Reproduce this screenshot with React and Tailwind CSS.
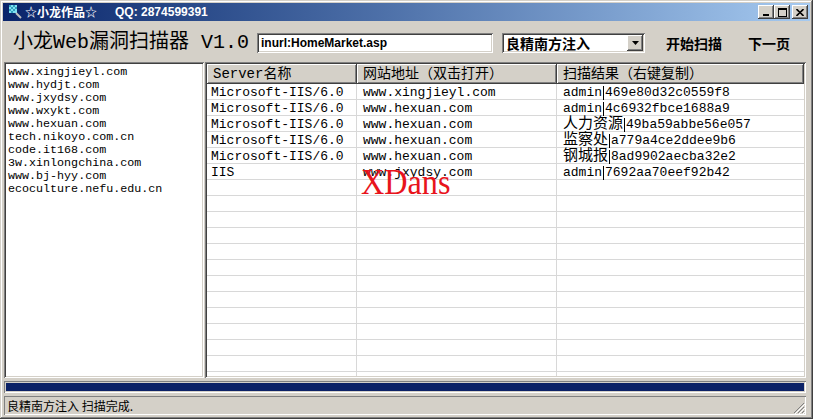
import React from "react";

const raised =
  "shadow-[inset_-1px_-1px_#404040,inset_1px_1px_#ffffff,inset_-2px_-2px_#808080,inset_2px_2px_#d4d0c8]";
const sunken =
  "shadow-[inset_1px_1px_#808080,inset_-1px_-1px_#ffffff,inset_2px_2px_#404040,inset_-2px_-2px_#d4d0c8]";

const sites = [
  "www.xingjieyl.com",
  "www.hydjt.com",
  "www.jxydsy.com",
  "www.wxykt.com",
  "www.hexuan.com",
  "tech.nikoyo.com.cn",
  "code.it168.com",
  "3w.xinlongchina.com",
  "www.bj-hyy.com",
  "ecoculture.nefu.edu.cn",
];

const rows = [
  ["Microsoft-IIS/6.0", "www.xingjieyl.com", "admin", "469e80d32c0559f8", false],
  ["Microsoft-IIS/6.0", "www.hexuan.com", "admin", "4c6932fbce1688a9", false],
  ["Microsoft-IIS/6.0", "www.hexuan.com", "人力资源", "49ba59abbe56e057", true],
  ["Microsoft-IIS/6.0", "www.hexuan.com", "监察处", "a779a4ce2ddee9b6", true],
  ["Microsoft-IIS/6.0", "www.hexuan.com", "钢城报", "8ad9902aecba32e2", true],
  ["IIS", "www.jxydsy.com", "admin", "7692aa70eef92b42", false],
];

function TitleIcon() {
  return (
    <svg width="16" height="16" viewBox="0 0 16 16" className="shrink-0">
      <rect x="2" y="1" width="8" height="8" fill="#7fe0f0" />
      <path d="M2 1h2v2H2zM6 1h2v2H6zM4 3h2v2H4zM8 3h2v2H8zM2 5h2v2H2zM6 5h2v2H6zM4 7h2v2H4z" fill="#30a0c0" />
      <path d="M9 9l5 5" stroke="#c0c0c0" strokeWidth="2" />
    </svg>
  );
}

function WinBtn({ children }) {
  return (
    <div className={`w-[16px] h-[14px] bg-[#d4d0c8] ${raised} flex items-center justify-center`}>
      {children}
    </div>
  );
}

export default function App() {
  return (
    <div
      className={`relative w-[813px] h-[419px] overflow-hidden bg-[#d4d0c8] flex flex-col shadow-[inset_-1px_-1px_#404040,inset_1px_1px_#d4d0c8,inset_-2px_-2px_#808080,inset_2px_2px_#ffffff] font-['Noto_Sans_CJK_SC',sans-serif]`}
    >
      {/* Title bar */}
      <div className="mx-[3px] mt-[3px] h-[18px] bg-linear-to-r from-[#0a246a] to-[#a6caf0] flex items-center pl-[4px] pr-[2px]">
        <TitleIcon />
        <span className="ml-[2px] text-white font-bold text-[12px] leading-none">☆小龙作品☆</span>
        <span className="ml-[18px] text-white font-bold text-[12px] leading-none font-['Liberation_Sans',sans-serif]">
          QQ: 2874599391
        </span>
        <div className="ml-auto flex items-center">
          <WinBtn>
            <svg width="8" height="7" viewBox="0 0 8 7">
              <rect x="1" y="5" width="6" height="2" fill="#000" />
            </svg>
          </WinBtn>
          <WinBtn>
            <svg width="9" height="9" viewBox="0 0 9 9">
              <rect x="0.5" y="0.5" width="8" height="8" fill="none" stroke="#000" />
              <rect x="0" y="0" width="9" height="2" fill="#000" />
            </svg>
          </WinBtn>
          <div className="w-[2px]" />
          <WinBtn>
            <svg width="8" height="7" viewBox="0 0 8 7">
              <path d="M0.5 0l3.5 3.5L7.5 0M0.5 7l3.5-3.5L7.5 7" stroke="#000" strokeWidth="1.6" fill="none" />
            </svg>
          </WinBtn>
        </div>
      </div>

      {/* Toolbar */}
      <div className="h-[41px] flex items-center pl-[13px] pt-[3px]">
        <span className="w-[235px] shrink-0 text-[20px] leading-none text-black font-['Liberation_Mono','Noto_Sans_CJK_SC',monospace] whitespace-pre">
          小龙Web漏洞扫描器 V1.0
        </span>
        <div className={`ml-[9px] w-[236px] h-[20px] bg-white ${sunken} flex items-center pl-[4px]`}>
          <span className="text-[12px] font-bold leading-none text-black font-['Liberation_Sans',sans-serif]">
            inurl:HomeMarket.asp
          </span>
        </div>
        <div className={`ml-[9px] w-[143px] h-[20px] bg-white ${sunken} flex items-center pl-[4px] pr-[2px]`}>
          <span className="text-[14px] font-bold leading-none text-black">良精南方注入</span>
          <div className={`ml-auto w-[16px] h-[16px] bg-[#d4d0c8] ${raised} flex items-center justify-center`}>
            <svg width="7" height="4" viewBox="0 0 7 4">
              <path d="M0 0h7L3.5 4z" fill="#000" />
            </svg>
          </div>
        </div>
        <span className="ml-[21px] text-[14px] font-bold leading-none text-black">开始扫描</span>
        <span className="ml-[26px] text-[14px] font-bold leading-none text-black">下一页</span>
      </div>

      {/* Main */}
      <div className="h-[316px] flex pl-[4px] pr-[7px] gap-[1px]">
        <div className={`w-[200px] h-full bg-white ${sunken} pt-[2px] pl-[4px] overflow-hidden`}>
          <div className="pt-[2px]">
            {sites.map((s) => (
              <div
                key={s}
                className="h-[13px] leading-[13px] text-[11.7px] text-black font-['Liberation_Mono',monospace] whitespace-nowrap"
              >
                {s}
              </div>
            ))}
          </div>
        </div>
        <div className={`flex-1 h-full bg-white ${sunken} p-[2px] overflow-hidden`}>
          <div className="h-full overflow-hidden flex flex-col">
            <div className="h-[20px] shrink-0 flex text-[14px] text-black font-['Liberation_Mono','Noto_Sans_CJK_SC',monospace]">
              <div className={`w-[150px] bg-[#d4d0c8] ${raised} flex items-center pl-[6px] leading-none`}>Server名称</div>
              <div className={`w-[200px] bg-[#d4d0c8] ${raised} flex items-center pl-[6px] leading-none`}>网站地址（双击打开）</div>
              <div className={`flex-1 bg-[#d4d0c8] ${raised} flex items-center pl-[6px] leading-none`}>扫描结果（右键复制）</div>
            </div>
            {Array.from({ length: 19 }).map((_, i) => {
              const r = rows[i];
              return (
                <div
                  key={i}
                  className="h-[16px] shrink-0 flex shadow-[inset_0_-1px_#d8d8d8] text-[13px] leading-[15px] text-black font-['Liberation_Mono','Noto_Sans_CJK_SC',monospace] whitespace-nowrap"
                >
                  <div className="w-[150px] border-r border-[#d8d8d8] pl-[4px] pt-[1px]">{r ? r[0] : ""}</div>
                  <div className="w-[200px] border-r border-[#d8d8d8] pl-[6px] pt-[1px]">{r ? r[1] : ""}</div>
                  <div className="flex-1 pl-[6px] pt-[1px] flex items-center">
                    {r ? (
                      <>
                        <span className={r[4] ? "text-[15px] leading-none" : "leading-none"}>{r[2]}</span>
                        <span className="w-[1px] h-[14px] bg-black mx-[1px]" />
                        <span className="leading-none">{r[3]}</span>
                      </>
                    ) : null}
                  </div>
                </div>
              );
            })}
          </div>
        </div>
      </div>

      {/* Progress */}
      <div className="mt-[3px] ml-[4px] mr-[7px] h-[12px] bg-[#d4d0c8] shadow-[inset_1px_1px_#808080,inset_-1px_-1px_#ffffff] p-[2px]">
        <div className="h-full bg-[#0c2266]" />
      </div>

      {/* Status */}
      <div className="mt-[3px] ml-[4px] mr-[7px] h-[19px] shadow-[inset_1px_1px_#808080,inset_-1px_-1px_#ffffff] flex items-center pl-[3px] relative">
        <span className="text-[12px] leading-none text-black">良精南方注入 扫描完成.</span>
        <svg width="12" height="12" viewBox="0 0 12 12" className="absolute right-[1px] bottom-[1px]">
          <path d="M11 1L1 11M11 5L5 11M11 9L9 11" stroke="#808080" strokeWidth="1" />
          <path d="M12 2L2 12M12 6L6 12M12 10L10 12" stroke="#ffffff" strokeWidth="1" />
        </svg>
      </div>

      {/* Watermark */}
      <div className="absolute left-[361px] top-[165px] origin-left scale-x-[0.92] text-[35px] leading-none text-[#e8141c] font-['Liberation_Serif',serif] pointer-events-none">
        XDans
      </div>
    </div>
  );
}
